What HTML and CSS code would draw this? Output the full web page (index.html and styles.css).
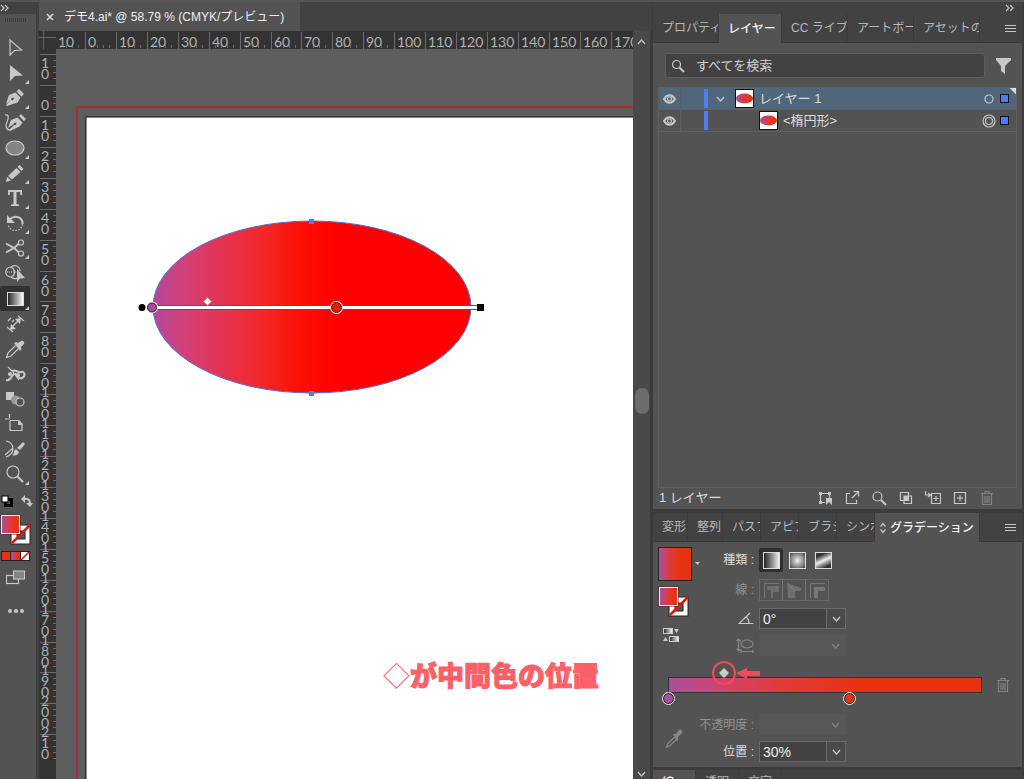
FILE: index.html
```html
<!DOCTYPE html>
<html lang="ja">
<head>
<meta charset="utf-8">
<title>デモ4.ai</title>
<link rel="stylesheet" href="styles.css">
</head>
<body>
<div class="app">
  <aside class="toolbar">
    <div class="strip"><svg width="10" height="8"><path class="line" d="M1 1l3 3-3 3M5 1l3 3-3 3"/></svg></div>
    <div class="grip"></div>
    <nav class="tools">
      <button class="tool" aria-label="選択"><svg viewBox="0 0 24 24"><path class="line" d="M7 4v15l4.500-4.500 7-.5z"/></svg></button>
      <button class="tool more" aria-label="ダイレクト選択"><svg viewBox="0 0 24 24"><path class="solid" d="M7 4v16l5-5 8-.5z"/></svg></button>
      <button class="tool more" aria-label="ペン"><svg viewBox="0 0 24 24"><path class="solid" d="M16 3l5 5-2.500 2.500-5-5zM12.500 6.500l5 5-3 5L4 20l-1-1 5-5 1.500.5 1.500-1.500-.5-1.500-2 .5-.5 2L3 18 6 9z"/></svg></button>
      <button class="tool" aria-label="曲線"><svg viewBox="0 0 24 24"><path class="line" d="M2 4c4-1 4 3 2 7s-1 8 3 8"/><path class="solid" d="M18 3l5 5-2 2-5-5zM14.500 6.500l5 5-3 4L7 20l-1-1 5-5h2l.5-2-2-.5-1.500 2L5 17 8 9z"/></svg></button>
      <button class="tool more" aria-label="楕円形"><svg viewBox="0 0 24 24"><ellipse class="line oval" cx="12" cy="12" rx="9" ry="7"/></svg></button>
      <button class="tool more" aria-label="鉛筆"><svg viewBox="0 0 24 24"><path class="solid" d="M16.500 4l4 4-2 2-4-4zM13.500 7l4 4L9 18.500 5 15zM4 16l4 3.500L3 21z"/></svg></button>
      <button class="tool more" aria-label="文字"><svg viewBox="0 0 24 24"><path class="solid" d="M5 4h14v5h-1.500L17 6h-3.500v12l2.500.5V20H8v-1.500l2.500-.5V6H7l-.5 3H5z"/></svg></button>
      <button class="tool more" aria-label="回転"><svg viewBox="0 0 24 24"><path class="line thick" d="M7 8c6-5 13-1 12.500 5"/><path class="solid" d="M4 4v8h8z"/><path class="line" stroke-dasharray="1.500 1.500" d="M19.500 13c-1 8-12 9-14.500 1"/></svg></button>
      <button class="tool more" aria-label="はさみ"><svg viewBox="0 0 24 24"><circle class="line" cx="18" cy="6.500" r="2.500"/><circle class="line" cx="18" cy="17.500" r="2.500"/><path class="line thick" d="M15.500 8L11 12l-8 4.500M15.500 16L11 12 3 7.500"/></svg></button>
      <button class="tool" aria-label="シェイプ形成"><svg viewBox="0 0 24 24"><path class="line" d="M8 6c3-3 9-1 9 4M8 6c-7 0-7 10 0 10 2 2 5 2 6 1M8 6c4 2 5 8 0 10"/><path class="line" stroke-dasharray="1 1" d="M4 11h9"/><path class="solid" d="M14 8v13l3-3.500 5-.5z"/></svg></button>
      <button class="tool more active" aria-label="グラデーション"><svg viewBox="0 0 24 24"><defs><linearGradient id="gray"><stop stop-color="#222"/><stop offset="1" stop-color="#fff"/></linearGradient></defs><rect x="4.500" y="5.500" width="16" height="13" fill="url(#gray)" stroke="#ddd"/></svg></button>
      <button class="tool" aria-label="ものさし"><svg viewBox="0 0 24 24"><path class="line" d="M4 15l6 5M15 4l6 5M8 16l8-8M5 9l3-3M9 10l2-2"/><path class="solid" d="M7 18l1-6 5 5zM18 6l-1 6-5-5z"/></svg></button>
      <button class="tool" aria-label="スポイト"><svg viewBox="0 0 24 24"><path class="line" d="M12.500 8.500L5 16l-1.500 4.500L8 19l7.500-7.500"/><path class="solid" d="M11 6l2-1 2 1 3-2c2-1 4 1 3 3L18 10l.5 2-1.500 2z"/></svg></button>
      <button class="tool" aria-label="パペットワープ"><svg viewBox="0 0 24 24"><path class="line thick" d="M3 18c6 2 5-7 9-6s3 6 7 4 3-7-1-6-4-3-9-1"/><path class="line" d="M5 5l5 5 6 8"/><circle class="solid" cx="7" cy="12" r="2"/><circle class="solid" cx="15" cy="13" r="2"/></svg></button>
      <button class="tool" aria-label="ブレンド"><svg viewBox="0 0 24 24"><path class="solid" d="M3 5h8v8H3z"/><circle cx="12.500" cy="13" r="4.500" fill="#969696"/><circle class="line fill" cx="17" cy="15" r="4"/></svg></button>
      <button class="tool" aria-label="アートボード"><svg viewBox="0 0 24 24"><path class="line" d="M2 7h5M6.500 2v4M7 9v9.500h12V12L16 8.500H7"/><path class="solid" d="M15 8l5 5h-5z"/></svg></button>
      <button class="tool" aria-label="ブラシ"><svg viewBox="0 0 24 24"><path class="line" d="M3 4c5 1 7 4 7 8s-2 6-7 8M2 18l8-7"/><path class="solid" d="M20 5l2 2-5 6-3-2zM13 12l3 3c-1 4-5 4-7 3 3-1 1-5 4-6z"/></svg></button>
      <button class="tool more" aria-label="ズーム"><svg viewBox="0 0 24 24"><circle class="line" cx="10" cy="10" r="6"/><path class="line thick" d="M14.500 14.500L20 20"/></svg></button>
    </nav>
    <div class="defaults">
      <svg width="12" height="12"><rect x="4.500" y="4.500" width="6" height="6" fill="none" stroke="#000" stroke-width="3"/><rect x="1" y="1" width="6" height="6" fill="#fff" stroke="#000"/></svg>
      <svg width="12" height="12"><path class="line thick" d="M3 4c5-1 6 2 6 5"/><path class="solid" d="M0 4l4-4v8zM5 8h7l-3 4z"/></svg>
    </div>
    <svg class="fillstroke" width="31" height="31"><use href="#fs"/></svg>
    <svg class="modes" width="29" height="10"><rect width="29" height="10" fill="#222"/><path fill="#e63312" d="M1 1h8v8H1z"/><path fill="url(#pr)" d="M10 1h9v8h-9z"/><path fill="#fff" d="M20 1h8v8h-8z"/><path stroke="#f00" stroke-width="1.500" d="M20 9l8-8"/></svg>
    <button class="screen" aria-label="スクリーンモード"><svg width="20" height="15"><rect class="line fill" x=".5" y="5.500" width="12" height="8"/><rect x="7.500" y="1" width="11" height="8" fill="#858585" stroke="#ccc"/></svg></button>
    <button class="dots" aria-label="ツールバーを編集"><i></i><i></i><i></i></button>
  </aside>

  <main class="doc">
    <div class="doctabs"><button class="doctab"><svg width="8" height="8"><path d="M1 1l6 6M7 1L1 7" stroke="#ddd" stroke-width="1.500"/></svg><span>デモ4.ai* @ 58.79 % (CMYK/プレビュー)</span></button></div>
    <div class="work">
      <div class="corner"></div>
      <svg class="ruler" id="hruler"></svg>
      <div class="scroll"><svg width="9" height="6"><path class="line" d="M1 5l3.500-4L8 5"/></svg><div class="thumb"></div><svg width="9" height="6"><path class="line" d="M1 1l3.500 4L8 1"/></svg></div>
      <svg class="ruler" id="vruler"></svg>
      <svg class="canvas">
        <defs>
          <linearGradient id="oval" gradientUnits="userSpaceOnUse" x1="96" y1="0" x2="281" y2="0">
            <stop stop-color="#b3479c"/><stop offset=".14" stop-color="#cd4380"/><stop offset=".3" stop-color="#de3860"/><stop offset=".6" stop-color="#f22828"/><stop offset=".78" stop-color="#fb1206"/><stop offset="1" stop-color="#f00"/>
          </linearGradient>
          <linearGradient id="pr"><stop stop-color="#a8509d"/><stop offset=".5" stop-color="#e03a38"/><stop offset=".8" stop-color="#e63312"/></linearGradient>
          <g id="fs">
            <rect x="11" y="11" width="19" height="19" fill="#fff" stroke="#222"/>
            <rect x="17" y="17" width="8" height="8" fill="#535353" stroke="#222"/>
            <path d="M12 29l18-18" stroke="#e11" stroke-width="2.500"/>
            <rect x=".5" y=".5" width="20" height="20" fill="#333"/><rect x="1.500" y="1.500" width="18" height="18" fill="url(#pr)" stroke="#eee"/>
          </g>
        </defs>
        <rect x="21" y="58" width="2000" height="2000" fill="none" stroke="#a33236" stroke-width="2"/>
        <rect x="30" y="68" width="2000" height="2000" fill="#fff" stroke="#111"/>
        <ellipse cx="256" cy="258" rx="159" ry="86" fill="url(#oval)" stroke="#4a70d8"/>
        <path fill="#4280ee" d="M253 170h5v5h-5zM253 342h5v5h-5z"/>
        <path d="M96 258.500h326" stroke="#555" stroke-width="5"/><path d="M90 258.500h334" stroke="#fff" stroke-width="3"/>
        <circle cx="86" cy="258.500" r="3.500"/><path d="M421 255h7v7h-7z"/>
        <circle cx="96" cy="258.500" r="6" fill="#eee"/><circle cx="96" cy="258.500" r="4.500" fill="#b0479c" stroke="#222"/>
        <circle cx="280.500" cy="258.500" r="6.500" fill="#eee"/><circle cx="280.500" cy="258.500" r="5" fill="#e8180c" stroke="#222"/>
        <path d="M151.500 248.500l4 4-4 4-4-4z" fill="#fff" stroke="#d88"/>
        <text class="note" x="327" y="637"><tspan class="thin">◇</tspan>が中間色の位置</text>
      </svg>
    </div>
  </main>

  <aside class="panels">
    <div class="strip right"><svg width="10" height="8"><path class="line" d="M1 1l3 3-3 3M5 1l3 3-3 3"/></svg></div>
    <section class="panel layers">
      <div class="tabs">
        <button class="tab">プロパティ</button><button class="tab on">レイヤー</button><button class="tab">CC ライブ</button><button class="tab">アートボー</button><button class="tab">アセットの</button>
        <button class="menu" aria-label="メニュー"><svg width="11" height="9"><path class="line" d="M0 1.500h11M0 4.500h11M0 7.500h11"/></svg></button>
      </div>
      <div class="search">
        <label class="searchbox"><svg width="14" height="14"><circle class="line" cx="5.500" cy="5.500" r="4"/><path class="line thick" d="M8.500 8.500l4.500 4.500"/></svg><input type="text" aria-label="検索" placeholder="すべてを検索"></label>
        <button class="filter" aria-label="フィルター"><svg width="15" height="16"><path class="solid" d="M0 0h15v2L9 8v8l-4-3V8L0 2z"/></svg></button>
      </div>
      <div class="list">
        <div class="row sel">
          <span class="eye"><svg width="13" height="10"><use href="#eye"/></svg></span><span class="lock"></span><span class="bar"></span>
          <svg class="chev" width="9" height="6"><path class="line" d="M1 1l3.500 4L8 1"/></svg>
          <svg class="thumbnail" width="19" height="19"><use href="#th"/></svg>
          <span class="name">レイヤー 1</span>
          <svg width="14" height="14"><circle class="line" cx="7" cy="7" r="4"/></svg><span class="mark"></span>
        </div>
        <div class="row child">
          <span class="eye"><svg width="13" height="10"><use href="#eye"/></svg></span><span class="lock"></span><span class="bar"></span>
          <svg class="thumbnail" width="19" height="19"><use href="#th"/></svg>
          <span class="name">&lt;楕円形&gt;</span>
          <svg width="14" height="14"><circle class="line" cx="7" cy="7" r="6"/><circle class="line" cx="7" cy="7" r="3.500"/></svg><span class="mark"></span>
        </div>
      </div>
      <div class="foot">
        <span class="count">1 レイヤー</span>
        <button aria-label="書き出し用に追加"><svg viewBox="0 0 16 16"><path class="line" d="M3.500 3.500h9V8M3.500 3.500v9H8"/><path class="solid" d="M2 2h3v3H2zM11 2h3v3h-3zM2 11h3v3H2zM9 8h6v7l-3-3-3 3z"/></svg></button>
        <button aria-label="書き出し"><svg viewBox="0 0 16 16"><path class="line" d="M6 3.500H2.500v10h10V10M8 8l6-6M9.500 1.500h5v5"/></svg></button>
        <button aria-label="検索"><svg viewBox="0 0 16 16"><circle class="line" cx="6.500" cy="6.500" r="4.500"/><path class="line thick" d="M10 10l5 5"/></svg></button>
        <button aria-label="マスク"><svg viewBox="0 0 16 16"><path class="line" d="M2.500 2.500h8v8h-8z"/><path class="line" d="M6 6h7.500v7.500H6z"/><path class="solid" d="M6 6h5v5H6z"/></svg></button>
        <button aria-label="サブレイヤー"><svg viewBox="0 0 16 16"><path class="line" d="M.5 1v4H5M3 3l2.500 2L3 7M6.500 3.500h9v10h-9zM11 6v5M8.500 8.500h5"/></svg></button>
        <button aria-label="新規レイヤー"><svg viewBox="0 0 16 16"><path class="line" d="M2.500 2.500h11v11h-11zM8 5v6M5 8h6"/></svg></button>
        <button aria-label="削除" disabled><svg viewBox="0 0 16 16"><use href="#bin"/></svg></button>
      </div>
    </section>

    <section class="panel gradient">
      <div class="tabs small">
        <button class="tab">変形</button><button class="tab">整列</button><button class="tab">パスファ</button><button class="tab">アピア</button><button class="tab">ブラシ</button><button class="tab">シンボ</button><button class="tab on"><svg width="6" height="12"><path class="line" d="M.5 4.500L3 1.500l2.500 3M.5 7.500L3 10.500l2.500-3"/></svg>グラデーション</button>
        <button class="menu" aria-label="メニュー"><svg width="11" height="9"><path class="line" d="M0 1.500h11M0 4.500h11M0 7.500h11"/></svg></button>
      </div>
      <div class="settings">
        <div class="swatches">
          <div class="preview"><span class="chip"></span><svg width="6" height="4"><path class="solid" d="M0 0h5L2.500 3z"/></svg></div>
          <svg width="31" height="31"><use href="#fs"/></svg>
          <svg class="reverse" width="16" height="16"><rect x=".5" y="1.500" width="9" height="5" fill="url(#gray)" stroke="#ccc"/><path class="solid" d="M11 2h5l-2.500 4zM0 14h5l-2.500-4z"/><rect x="6.500" y="9.500" width="9" height="5" fill="url(#gray)" stroke="#ccc"/></svg>
        </div>
        <div class="fields">
          <span class="lab">種類 :</span>
          <div class="types">
            <button class="type on" aria-label="線形"><i class="g lin"></i></button><button class="type" aria-label="円形"><i class="g rad"></i></button><button class="type" aria-label="フリーフォーム"><i class="g free"></i></button>
          </div>
          <span class="lab dim">線 :</span>
          <div class="strokes">
            <button disabled aria-label="線内"><svg width="16" height="16"><path d="M1.500 16V1.500H16" stroke="#aaa" fill="none"/><path fill="#999" d="M4 4h12v6h-6v6H8V8H4z"/></svg></button><button disabled aria-label="線に沿う"><svg width="16" height="16"><path fill="#999" d="M1 1l14 5v3H9v7H2z"/><path stroke="#bbb" d="M1 1l8 8"/></svg></button><button disabled aria-label="線に交差"><svg width="16" height="16"><path d="M1.500 16V1.500H16" stroke="#aaa" fill="none"/><path fill="#aaa" d="M5 5h11v4H9v7H5z"/></svg></button>
          </div>
          <label class="lab" for="angle"><svg width="16" height="13"><path class="line" d="M15.500 11.500H1L12 1M8 5c3 2 3 4 3 6.500"/></svg></label>
          <div class="combo"><input id="angle" type="text" value="0°"><button aria-label="角度を選択"><svg width="9" height="6"><path class="line" d="M1 1l3.500 4L8 1"/></svg></button></div>
          <label class="lab dim" for="ratio"><svg width="18" height="15"><ellipse class="line" cx="11" cy="6" rx="6" ry="4"/><path class="line" d="M2.500 1v12M.5 3l2-2 2 2M.5 11l2 2 2-2M5 13.500h12M5 12v3M17 12v3"/></svg></label>
          <div class="combo off"><input id="ratio" type="text" disabled><button disabled aria-label="縦横比を選択"><svg width="9" height="6"><path class="line" d="M1 1l3.500 4L8 1"/></svg></button></div>
        </div>
      </div>
      <div class="slider">
        <div class="track">
          <span class="stop first"></span><span class="stop second"></span>
          <svg class="mid" width="80" height="28"><path fill="#c9cec3" d="M21 9l5 5-5 5-5-5z"/><circle cx="21" cy="14" r="11" fill="none" stroke="#f5485a" stroke-width="2"/><path fill="#f5485a" d="M33 14l11-5v3h13v5H44v3z"/></svg>
        </div>
        <button class="del" disabled aria-label="分岐点を削除"><svg width="16" height="16"><use href="#bin"/></svg></button>
      </div>
      <div class="settings bottom">
        <svg class="picker" width="18" height="20"><path class="line" d="M9.500 9L3 15.500 1.500 19 5 17.500 12 11"/><path class="solid" d="M8 6l3 0 3-4c2-1 4 1 3 3l-4 4v3l-1 1z"/></svg>
        <div class="fields">
          <label class="lab dim" for="opacity">不透明度 :</label>
          <div class="combo off"><input id="opacity" type="text" disabled><button disabled aria-label="不透明度を選択"><svg width="9" height="6"><path class="line" d="M1 1l3.500 4L8 1"/></svg></button></div>
          <label class="lab" for="pos">位置 :</label>
          <div class="combo"><input id="pos" type="text" value="30%"><button aria-label="位置を選択"><svg width="9" height="6"><path class="line" d="M1 1l3.500 4L8 1"/></svg></button></div>
        </div>
      </div>
    </section>
    <section class="panel next"><div class="tabs"><button class="tab on">線</button><button class="tab">透明</button><button class="tab">文字</button></div></section>
  </aside>
</div>
<svg class="symbols" width="0" height="0">
  <symbol id="eye" viewBox="0 0 13 10"><path class="line thick" d="M1 5c3-5 8-5 11 0-3 5-8 5-11 0z"/><circle class="line" cx="6.500" cy="5" r="2"/></symbol>
  <symbol id="th" viewBox="0 0 19 19"><rect x=".5" y=".5" width="18" height="18" fill="#fff" stroke="#111"/><ellipse cx="9.500" cy="9.500" rx="8.500" ry="5" fill="url(#pr)"/></symbol>
  <symbol id="bin" viewBox="0 0 16 16"><path class="line" d="M2 3.500h12M6 3V1.500h4V3M3.500 4v10.500h9V4M6 6v7M8 6v7M10 6v7"/></symbol>
</svg>
<script src="rulers.js"></script>
</body>
</html>
```
FILE: rulers.js
```javascript
const NS = 'http://www.w3.org/2000/svg';
const STEP = 31;

function add(parent, tag, attrs, text) {
  const el = document.createElementNS(NS, tag);
  for (const key in attrs) el.setAttribute(key, attrs[key]);
  if (text !== undefined) el.textContent = text;
  parent.appendChild(el);
}

// Position of a ruler mark, in pixels from the ruler's start.
function mark(origin, tens) {
  return origin + Math.round(tens * (STEP - 0.08));
}

const h = document.getElementById('hruler');
for (let i = -1; i < 19; i++) {
  const x = mark(29, i);
  add(h, 'path', { class: 'major', d: `M${x}.5 1v17` });
  for (let k = 1; k < 5; k++) add(h, 'path', { class: 'minor', d: `M${x + k * 6}.5 14v3` });
  add(h, 'text', { x: i < 0 ? 2 : x + 3, y: 16 }, Math.abs(i * 10));
}

const v = document.getElementById('vruler');
for (let i = -1; i < 22; i++) {
  const y = mark(36, i);
  add(v, 'path', { class: 'major', d: `M1 ${y}.5h16` });
  for (let k = 1; k < 5; k++) add(v, 'path', { class: 'minor', d: `M14 ${y + k * 6}.5h3` });
  const digits = String(Math.abs(i * 10)).split('');
  digits.forEach((d, n) => {
    add(v, 'text', { x: 6, y: y + 25 - (digits.length - 1 - n) * 11, 'text-anchor': 'middle' }, d);
  });
}
```
FILE: styles.css
```css
* { box-sizing: border-box; }
body {
  margin: 0;
  background: #535353;
  color: #dcdcdc;
  font: 12px/16px "Liberation Sans", "Noto Sans CJK JP", sans-serif;
}
button, input { font: inherit; color: inherit; background: none; border: 0; padding: 0; margin: 0; }
svg { display: block; flex: none; }
.symbols { position: absolute; }
.line { fill: none; stroke: #c8c8c8; stroke-width: 1.2; }
.line.thick { stroke-width: 2; }
.line.fill { fill: #535353; }
.line.oval { fill: #858585; }
.solid { fill: #c8c8c8; }

.app { display: grid; grid-template-columns: 37px minmax(0, 1fr) 372px; height: 100vh; overflow: hidden; border-top: 2px solid #555; }
.strip { height: 12px; background: #424242; padding: 2px 0 0; }
.strip.right { display: flex; justify-content: flex-end; padding-right: 7px; }

/* tools */
.toolbar { border-right: 1px solid #3c3c3c; }
.grip { width: 21px; height: 4px; margin: 4px 5px 0; background: repeating-linear-gradient(90deg, #3c3c3c 0 1px, #535353 1px 2px); }
.tools { display: flex; flex-direction: column; padding-top: 13px; }
.tool { position: relative; height: 25px; width: 30px; display: flex; justify-content: center; align-items: center; }
.tool svg { width: 24px; height: 24px; }
.tool.active { background: #303030; margin-top: 1px; border-radius: 2px; }
.tool.more::after { content: ""; position: absolute; right: 1px; bottom: 1px; border: 2px solid; border-color: transparent #ccc #ccc transparent; }
.defaults { display: flex; justify-content: space-between; padding: 9px 3px 0 1px; }
.fillstroke { margin-top: 7px; }
.modes { margin: 6px 0 0 1px; }
.screen { display: block; margin: 9px 0 0 6px; }
.dots { display: flex; gap: 2px; margin: 24px 0 0 8px; }
.dots i { width: 4px; height: 4px; border-radius: 50%; background: #c8c8c8; }

/* document */
.doc { display: flex; flex-direction: column; min-width: 0; background: #424242; }
.doctabs { height: 29px; padding-left: 2px; display: flex; }
.doctab { display: flex; align-items: center; gap: 10px; width: 261px; padding-left: 7px; background: #535353; white-space: nowrap; color: #eee; }
.work { flex: 1; min-height: 0; display: grid; grid-template: 18px minmax(0, 1fr) / 19px minmax(0, 1fr) 19px; }
.corner, .ruler { background: #333; }
.corner { border-left: 2px solid #424242; background: linear-gradient(#666, #666) 4px 0 / 1px 18px no-repeat, linear-gradient(#666, #666) 0 6px / 17px 1px no-repeat, #333; }
.ruler { width: 100%; height: 100%; overflow: hidden; font: 14px Lato, sans-serif; }
#vruler { border-left: 2px solid #424242; }
.ruler text { fill: #b0b0b0; }
.major, .minor { stroke: #6c6c6c; }
.canvas { width: 100%; height: 100%; background: #5e5e5e; overflow: hidden; }
.scroll { grid-column: 3; grid-row: 1 / 3; background: #494949; display: flex; flex-direction: column; justify-content: space-between; align-items: center; padding: 8px 0 2px; border-right: 2px solid #3a3a3a; }
.thumb { width: 14px; height: 26px; margin-bottom: 14px; border-radius: 7px; background: #6c6c6c; }
.note { font: 900 27px "Noto Sans CJK JP", sans-serif; fill: #fb6068; stroke: #fb6068; stroke-width: 1px; }
.note .thin { font-weight: 400; stroke: none; }

/* panels */
.panels { background: #3c3c3c; padding: 0 2px 0 1px; display: flex; flex-direction: column; min-width: 0; }
.panel { background: #535353; }
.tabs { display: flex; height: 29px; background: #424242; border-bottom: 1px solid #383838; }
.tab { flex: none; width: 66px; padding-left: 9px; overflow: hidden; white-space: nowrap; text-align: left; color: #b8b8b8; border-right: 1px solid #3b3b3b; }
.tab.on { width: 63px; background: #535353; color: #f2f2f2; margin-bottom: -1px; font-weight: 500; }
.small .tab { width: 38px; }
.small .tab:nth-child(-n+2) { width: 35px; }
.small .tab.on { width: 105px; display: flex; align-items: center; gap: 4px; padding-left: 5px; }
.menu { margin-left: auto; padding-right: 6px; }

.layers { flex: 1; display: flex; flex-direction: column; margin-bottom: 4px; min-height: 0; }
.search { display: flex; align-items: center; padding: 10px 11px 9px 12px; gap: 11px; }
.searchbox { flex: 1; height: 25px; display: flex; align-items: center; gap: 11px; padding-left: 5px; background: #424242; border: 1px solid #5c5c5c; border-radius: 3px; }
.searchbox input { flex: 1; font-size: 13px; outline: 0; }
.searchbox input::placeholder { color: #cfcfcf; opacity: 1; }
.list { flex: 1; min-height: 0; margin: 0 5px; border: 1px solid #5f5f5f; }
.row { height: 22px; display: flex; align-items: center; gap: 5px; padding-right: 7px; border-bottom: 1px solid #606060; font-size: 13px; }
.row.sel { background: linear-gradient(225deg, #ddd 4px, transparent 5px), #4f667b; }
.eye { width: 22px; height: 100%; display: flex; align-items: center; padding-left: 4px; border-right: 1px solid #5d5d5d; margin-right: -5px; }
.lock { width: 23px; margin-right: -5px; }
.bar { width: 4px; height: 19px; background: #4f7cf0; }
.chev { margin: 0 5px 0 3px; }
.child .thumbnail { margin-left: 46px; }
.name { flex: 1; }
.mark { width: 9px; height: 9px; background: #4f7cf0; border: 1px solid #111; }
.row .mark { margin-left: -1px; }
.foot { display: flex; align-items: center; gap: 11px; height: 21px; padding: 0 27px 2px 6px; font-size: 13px; }
.count { flex: 1; }
.foot svg { width: 16px; height: 16px; }
button:disabled { opacity: 0.4; }

.settings { display: flex; padding: 3px 5px 0; }
.swatches { width: 48px; display: flex; flex-direction: column; gap: 5px; padding-top: 2px; }
.preview { display: flex; align-items: center; gap: 3px; }
.chip { width: 34px; height: 34px; border: 1px solid #222; background: linear-gradient(90deg, #a8509d, #e03a38 35%, #e63312 60%); }
.reverse { margin: 5px 0 0 5px; }
.fields { display: grid; grid-template-columns: 49px 87px; grid-template-rows: 30px 30px 27px 27px; column-gap: 4px; align-items: center; }
.lab { justify-self: end; white-space: nowrap; margin-right: 1px; }
.dim { opacity: 0.45; }
.types { display: flex; gap: 2px; }
.type { width: 24px; height: 24px; display: grid; place-items: center; }
.type.on { background: #2f2f2f; border-radius: 2px; }
.g { width: 17px; height: 17px; border: 1px solid #ddd; }
.lin { background: linear-gradient(90deg, #222, #eee); }
.rad { background: radial-gradient(#eee, #444); }
.free { background: linear-gradient(155deg, #333 20%, #eee 50%, #333 85%); }
.strokes { display: flex; }
.strokes button { width: 24px; height: 22px; display: grid; place-items: center; border: 1px solid #888; margin-right: -1px; }
.combo { display: flex; height: 21px; border: 1px solid #6a6a6a; background: #424242; }
.combo input { flex: 1; min-width: 0; padding-left: 3px; font-size: 14px; color: #f0f0f0; }
.combo button { width: 19px; display: grid; place-items: center; background: #4a4a4a; border-left: 1px solid #6a6a6a; }
.combo.off { background: #575757; border-color: #575757; }
.combo.off button { background: none; border: 0; }
.slider { display: flex; justify-content: space-between; padding: 18px 11px 0 15px; gap: 13px; }
.track { position: relative; flex: 1; height: 16px; border: 1px solid #333; background: linear-gradient(90deg, #a8509d, #d14468 18%, #e23a38 38%, #e63312 60%); }
.stop { position: absolute; top: 14px; width: 13px; height: 13px; margin-left: -7px; border-radius: 50%; border: 1px solid #eee; box-shadow: inset 0 0 0 1px #222; background: #a8509d; }
.stop.first { left: 0; }
.stop.second { left: 58%; background: #e63312; }
.mid { position: absolute; left: 11%; top: -19px; }
.bottom { padding: 18px 5px 2px; }
.picker { margin: 17px 22px 0 7px; opacity: 0.45; }
.bottom .fields { grid-template-columns: 50px 87px; grid-template-rows: 27px 27px; }
.next { height: 9px; margin-top: 3px; overflow: hidden; flex: none; }
.next .tab { width: 43px; padding-bottom: 4px; }
```
